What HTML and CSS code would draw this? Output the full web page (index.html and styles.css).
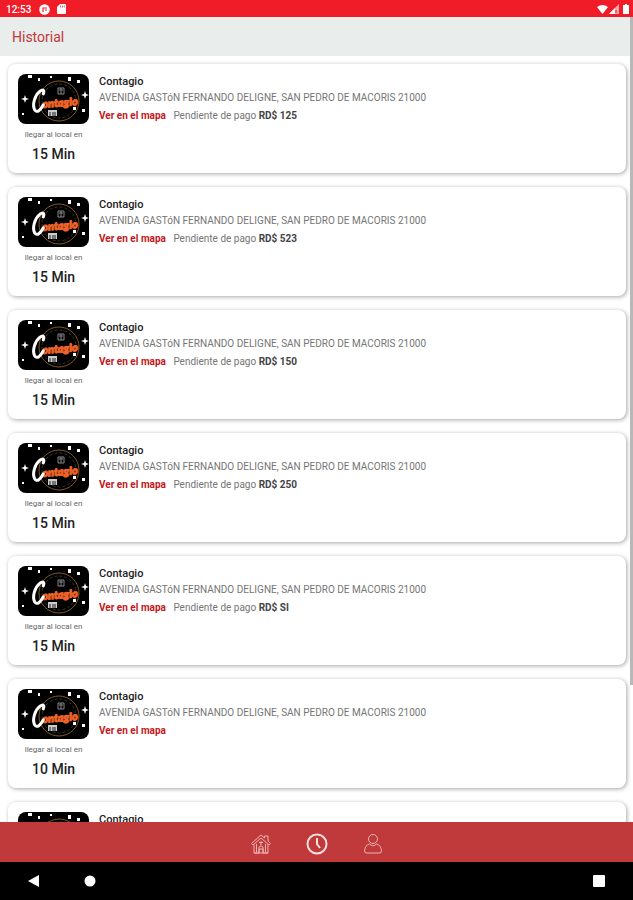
FILE: index.html
```html
<!DOCTYPE html>
<html lang="es">
<head>
    <meta charset="UTF-8">
    <meta name="viewport" content="width=device-width, initial-scale=1.0">
    <title>Historial</title>
    <link rel="stylesheet" href="styles.css">
</head>
<body>
    <svg class="sprite" aria-hidden="true">
        <symbol id="logo" viewBox="0 0 71 50">
            <rect width="71" height="50" fill="#000"/>
            <g fill="none" stroke="#80571f">
                <circle cx="41" cy="27" r="20"/>
                <circle cx="41" cy="27" r="17" stroke="#2c3a2c" stroke-dasharray="3 2"/>
            </g>
            <g fill="#fff">
                <path d="M10 1h4v3h-4zM20 4h2v3h-2zM32 2h2v2h-2zM50 3h3v4h-3zM59 6h3v3h-3zM4 39h2v2h-2zM64 35h3v3h-3zM55 33h3v3h-3z"/>
                <path d="M7 21l1 3 3 1-3 1-1 3-1-3-3-1 3-1zM67 17l1 3 3 1-3 1-1 3-1-3-3-1 3-1z"/>
                <path d="M30 36h9v6h-9z" fill="#ccc"/>
            </g>
            <path d="M32 38v4M35 38v4M37 38v4" stroke="#222"/>
            <path d="M40 14h6v6h-6zM41 16h4M43 14v6" fill="none" stroke="#888"/>
            <g transform="rotate(-5 36 28)">
                <text x="24" y="33" class="logo-rest">ontagio</text>
                <path d="M26 19c2-4 0-5-3-3c-6 4-9 13-7 18c2 4 6 1 9-4" fill="none" stroke="#fff" stroke-width="3" stroke-linecap="round"/>
            </g>
        </symbol>
    </svg>

    <div class="status-bar">
        <span>12:53</span>
        <svg width="11" height="11" viewBox="0 0 11 11"><circle cx="5.500" cy="5.500" r="5.300" fill="#fff"/><path d="M4 8V4h4M6 6h2" fill="none" stroke="#f01c28" stroke-width="1.200"/></svg>
        <svg class="sd" width="9" height="10" viewBox="0 0 9 10"><path d="M3 0h5q1 0 1 1v8q0 1-1 1H1q-1 0-1-1V3z" fill="#fff"/><path d="M3.500 1.500v2M5.500 1.500v2M7.300 1.500v2" stroke="#f01c28" stroke-width=".7"/></svg>
        <div class="status-right">
            <svg width="11" height="9" viewBox="0 0 11 9"><path d="M0 2q5.500-4 11 0L5.500 9z" fill="#fff"/></svg>
            <svg width="10" height="10" viewBox="0 0 10 10"><path d="M0 10L10 0v10z" fill="#fff" opacity=".6"/><path d="M0 10l6-6v6z" fill="#fff"/><path d="M7 6v3" stroke="#f01c28"/></svg>
            <svg class="battery" width="6" height="10" viewBox="0 0 6 10"><path d="M2 0h2v1h2v9H0V1h2z" fill="#fff"/></svg>
        </div>
    </div>

    <div class="screen">
        <header class="header">
            <h1>Historial</h1>
        </header>
        <main class="list" id="list"></main>
        <div class="scrollbar"></div>
    </div>

    <nav class="tabs">
        <button type="button" aria-label="Inicio">
            <svg width="22" height="22" viewBox="0 0 22 22"><path d="M1.500 10.500L11 2l3.500 3V3H18v5l2.500 2.500-1.500 1.500-8-7-8 7zM4 11.500V20h5v-6q2-2.500 4 0v6h5v-8.500M4 20h14M6.500 11v8M15.500 11v8M9 9.500h4M11 8v4M9 20v-4h4v4"/></svg>
        </button>
        <button type="button" class="active" aria-label="Historial">
            <svg width="22" height="22" viewBox="0 0 22 22"><circle cx="11" cy="11" r="9.500"/><path d="M11 5v6l3 4"/></svg>
        </button>
        <button type="button" aria-label="Perfil">
            <svg width="22" height="22" viewBox="0 0 22 22"><circle cx="11" cy="6" r="4.500"/><path d="M7.500 11Q3 12 2.500 18q0 2 2 2h13q2 0 2-2-.5-6-5-7-3.500 3.500-7 0z"/></svg>
        </button>
    </nav>

    <div class="system-nav">
        <button type="button" aria-label="Atrás"><svg width="12" height="12" viewBox="0 0 12 12"><path d="M0 6L11 0v12z"/></svg></button>
        <button type="button" aria-label="Pantalla de inicio"><svg width="12" height="12" viewBox="0 0 12 12"><circle cx="6" cy="6" r="5.500"/></svg></button>
        <button type="button" class="recent" aria-label="Recientes"><svg width="12" height="12" viewBox="0 0 12 12"><rect width="12" height="12" rx="1"/></svg></button>
    </div>

    <script src="script.js"></script>
</body>
</html>
```
FILE: styles.css
```css
* {
    box-sizing: border-box;
}
body {
    display: flex;
    flex-direction: column;
    height: 100vh;
    margin: 0;
    overflow: hidden;
    background: #fff;
    font-family: Roboto, sans-serif;
}
button {
    display: flex;
    padding: 0;
    border: 0;
    background: none;
    cursor: pointer;
}
svg {
    display: block;
}
.sprite {
    position: absolute;
    width: 0;
    height: 0;
}
.status-bar {
    display: flex;
    align-items: center;
    flex: none;
    height: 17px;
    padding: 1px 4px 0 6px;
    background: #f01c28;
    color: #fff;
    font-size: 10px;
    font-weight: 500;
}
.status-bar span {
    margin-right: 8px;
}
.sd {
    margin-left: 7px;
}
.status-right {
    display: flex;
    align-items: center;
    gap: 1px;
    margin-left: auto;
}
.battery {
    margin-left: 3px;
}
.screen {
    display: flex;
    flex-direction: column;
    flex: 1;
    min-height: 0;
    position: relative;
}
.header {
    flex: none;
    padding: 11px 12px 9px;
    background: #e9edec;
}
.header h1 {
    margin: 0;
    color: #c0393b;
    font-size: 14px;
    font-weight: 400;
    line-height: 19px;
}
.list {
    flex: 1;
    min-height: 0;
    padding: 8px 7px 0 8px;
    overflow: hidden;
}
.card {
    display: flex;
    gap: 10px;
    height: 109px;
    margin-bottom: 14px;
    padding: 10px;
    border-radius: 8px;
    background: #fff;
    box-shadow: 1px 1px 4px rgba(0, 0, 0, 0.35);
}
.place {
    width: 71px;
    text-align: center;
}
.logo {
    width: 71px;
    height: 50px;
    border-radius: 8px;
}
.logo-rest {
    fill: #f0642a;
    stroke: #f0642a;
    stroke-width: 1px;
    font-family: Lato, sans-serif;
    font-size: 11px;
    font-style: italic;
    font-weight: 900;
}
.place p {
    margin: 6px 0 0;
    color: #666;
    font-size: 8px;
    line-height: 10px;
}
.place strong {
    display: block;
    margin-top: 6px;
    color: #222;
    font-size: 14px;
    font-weight: 500;
    line-height: 16px;
}
.info h2 {
    margin: 0;
    color: #222;
    font-size: 11px;
    font-weight: 500;
    line-height: 16px;
}
.info p {
    margin: 0;
    color: #757575;
    font-size: 10px;
    line-height: 16px;
}
.info .payment {
    margin-top: 2px;
}
.info a {
    margin-right: 5px;
    color: #c4161c;
    font-weight: 700;
    text-decoration: none;
}
.info b {
    color: #444;
}
.scrollbar {
    position: absolute;
    top: 0;
    right: 0;
    width: 3px;
    height: 83%;
    background: #b8b8b8;
}
.tabs {
    display: flex;
    align-items: center;
    justify-content: center;
    flex: none;
    gap: 34px;
    height: 40px;
    padding-top: 3px;
    background: #c0393b;
}
.tabs svg {
    fill: none;
    stroke: #f0b4b4;
    stroke-width: 1;
}
.tabs .active svg {
    stroke: #fbe0e0;
    stroke-width: 2;
}
.system-nav {
    display: flex;
    align-items: center;
    flex: none;
    gap: 44px;
    height: 38px;
    padding: 0 28px;
    background: #000;
}
.system-nav svg {
    fill: #fff;
}
.recent {
    margin-left: auto;
}
```
FILE: script.js
```js
const orders = [
    { time: '15 Min', amount: 'RD$ 125' },
    { time: '15 Min', amount: 'RD$ 523' },
    { time: '15 Min', amount: 'RD$ 150' },
    { time: '15 Min', amount: 'RD$ 250' },
    { time: '15 Min', amount: 'RD$ SI' },
    { time: '10 Min', amount: '' },
    { time: '15 Min', amount: '' }
];

document.getElementById('list').innerHTML = orders.map(order => `
    <article class="card">
        <div class="place">
            <svg class="logo"><use href="#logo"/></svg>
            <p>llegar al local en</p>
            <strong>${order.time}</strong>
        </div>
        <div class="info">
            <h2>Contagio</h2>
            <p>AVENIDA GASTóN FERNANDO DELIGNE, SAN PEDRO DE MACORIS 21000</p>
            <p class="payment">
                <a href="#mapa">Ver en el mapa</a>
                ${order.amount ? `<span>Pendiente de pago <b>${order.amount}</b></span>` : ''}
            </p>
        </div>
    </article>
`).join('');
```
